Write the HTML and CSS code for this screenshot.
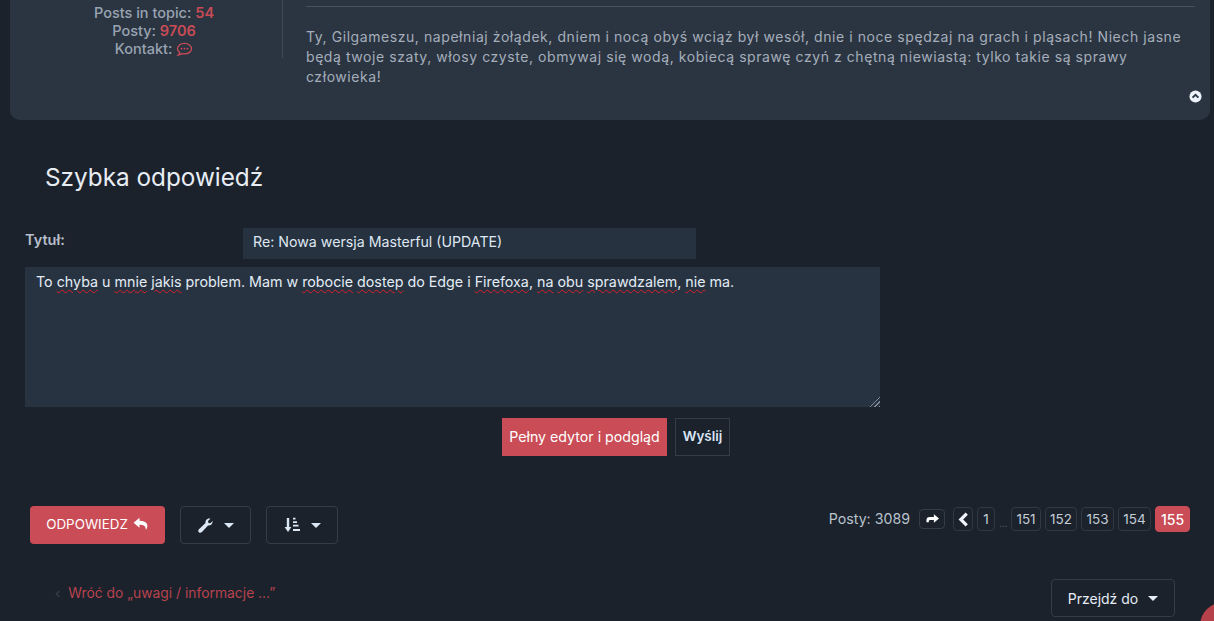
FILE: index.html
```html
<!DOCTYPE html>
<html lang="pl">
<head>
<meta charset="utf-8">
<title>Szybka odpowiedź</title>
<link rel="stylesheet" href="styles.css">
</head>
<body>
<section class="post">
  <div class="profile">
    <div class="stats">
      <div>Posts in topic: <b class="hot">54</b></div>
      <div>Posty: <b class="hot">9706</b></div>
      <div>Kontakt: <svg class="chat" viewBox="0 0 18 16" width="17" height="15"><path d="M9 1.500c4.200 0 7.500 2.500 7.500 5.600S13.200 12.700 9 12.700c-1 0-1.900-.1-2.800-.4-1 .8-2.300 1.500-4 1.700.9-.9 1.500-1.900 1.700-2.900C2.400 10.100 1.500 8.700 1.500 7.100 1.500 4 4.800 1.500 9 1.500z" fill="none" stroke="currentColor" stroke-width="1.400"/><circle cx="5.800" cy="7.100" r="1" fill="currentColor"/><circle cx="9" cy="7.100" r="1" fill="currentColor"/><circle cx="12.200" cy="7.100" r="1" fill="currentColor"/></svg></div>
    </div>
  </div>
  <div class="body">
    <hr class="rule">
    <p class="signature">Ty, Gilgameszu, napełniaj żołądek, dniem i nocą obyś wciąż był wesół, dnie i noce spędzaj na grach i pląsach! Niech jasne będą twoje szaty, włosy czyste, obmywaj się wodą, kobiecą sprawę czyń z chętną niewiastą: tylko takie są sprawy człowieka!</p>
    <svg class="top" viewBox="0 0 14 14" width="13" height="13"><circle cx="7" cy="7" r="6.500" fill="#eef3fa"/><path d="M3.800 8.300 7 5.100l3.200 3.200" fill="none" stroke="#2b3543" stroke-width="2"/></svg>
  </div>
</section>

<h2 class="title">Szybka odpowiedź</h2>

<form class="reply">
  <div class="field">
    <span class="label">Tytuł:</span>
    <div class="subject">Re: Nowa wersja Masterful (UPDATE)</div>
  </div>
  <div class="message">To <u>chyba</u> u <u>mnie</u> <u>jakis</u> problem. Mam w <u>robocie</u> <u>dostep</u> do Edge i <u>Firefoxa</u>, <u>na</u> <u>obu</u> <u>sprawdzalem</u>, <u>nie</u> ma.</div>
  <div class="submit">
    <button type="button" class="full">Pełny edytor i podgląd</button>
    <button type="button" class="send">Wyślij</button>
  </div>
</form>

<div class="actions">
  <div class="tools">
    <button type="button" class="reply-btn">ODPOWIEDZ <svg viewBox="0 0 16 14" width="16" height="14"><path d="M6.500.8.600 5.700l5.900 5V7.700c3.800 0 6.200.6 6.400 5.300 2.700-3.800 2.400-9.100-6.400-9.300z" fill="currentColor"/></svg></button>
    <button type="button" class="tool tool-a"><svg viewBox="0 0 16 16" width="15" height="15"><path d="M15.500 4.100c0 2.500-2.300 4.400-4.800 3.900L4.200 15c-1 1-2.500 1-3.300.1-.9-.9-.8-2.300.1-3.200l7-6.500C7.500 3 9.400.500 11.900.500c.5 0 .9.100 1.300.2l-2.500 2.500.4 2.100 2.100.4 2.500-2.500c.1.300.3.900.3.900z" fill="currentColor"/></svg><i class="caret"></i></button>
    <button type="button" class="tool tool-b"><svg viewBox="0 0 16 16" width="16" height="16"><path d="M4 1v10" stroke="currentColor" stroke-width="2.400"/><path d="M.6 10h6.800L4 15z" fill="currentColor"/><path d="M9 1.700h2.500M9 5.200h4M9 8.700h5.500M9 13h7" stroke="currentColor" stroke-width="1.800"/></svg><i class="caret"></i></button>
  </div>
  <nav class="pagination">
    <span class="count">Posty: 3089</span>
    <a class="page jump"><svg viewBox="0 0 14 10" width="13" height="10"><path d="M8.500 0 14 4.500 8.500 9V6.200H4.200C3.200 6.200 3 7 3 8.500H.5V6C.5 3.800 1.800 2.800 4 2.800h4.500z" fill="currentColor"/></svg></a>
    <span class="group">
      <a class="page prev"><svg viewBox="0 0 10 14" width="11" height="15"><path d="M8 1.500 2.500 7 8 12.500" fill="none" stroke="currentColor" stroke-width="3"/></svg></a>
      <a class="page one">1</a>
      <span class="dots">…</span>
      <a class="page num first">151</a>
      <a class="page num second">152</a>
      <a class="page num">153</a>
      <a class="page num">154</a>
      <a class="page current">155</a>
    </span>
  </nav>
</div>

<div class="footer">
  <a class="back"><span class="chev">‹</span>Wróć do „uwagi / informacje ...”</a>
  <button type="button" class="jumpto">Przejdź do <i class="caret"></i></button>
</div>
<span class="fab"></span>
</body>
</html>
```

FILE: styles.css
```css
* { box-sizing: border-box; }
html, body { height: 621px; overflow: hidden; }
body {
  margin: 0;
  background: #1b222c;
  color: #e6edf6;
  font-family: Inter, "Noto Sans", sans-serif;
  font-size: 14px;
  position: relative;
}
button { font-family: inherit; cursor: pointer; }

.post {
  margin: 0 4px 0 10px;
  height: 120px;
  display: flex;
  background: #2b3542;
  border-radius: 0 0 10px 10px;
}
.profile { width: 273px; height: 58px; border-right: 1px solid #3d4855; padding: 4px 0 0 16px; }
.stats { text-align: center; font-size: 14.500px; line-height: 18px; color: #99a3b1; font-weight: 500; }
.hot { color: #c94b55; font-weight: 600; }
.chat { color: #c94b55; vertical-align: -3px; }
.body { flex: 1; padding: 6px 15px 0 23px; position: relative; }
.rule { margin: 0; border: 0; border-top: 1px solid #47515e; }
.signature { margin: 20px 0 0; font-size: 14px; line-height: 20px; letter-spacing: .57px; color: #a5aeba; }
.top { position: absolute; right: 8px; top: 90px; }

.title { margin: 0; padding: 43px 0 0 45px; font-size: 24.300px; line-height: 29px; font-weight: 400; color: #e8edf4; }

.reply { margin: 36px 0 0 25px; width: 855px; }
.field { display: flex; height: 31px; }
.label { width: 218px; font-weight: 600; line-height: 24px; color: #b6bfca; font-size: 14.500px; }
.subject { width: 453px; height: 31px; background: #263240; padding: 0 10px; line-height: 28px; font-size: 14.200px; color: #dfe7f1; }
.message {
  margin-top: 8px;
  height: 140px;
  background: #273341;
  padding: 5px 11px;
  line-height: 20px;
  font-size: 14.270px;
  color: #e3ebf5;
  position: relative;
}
.message::after {
  content: "";
  position: absolute;
  right: 0;
  bottom: 0;
  width: 13px;
  height: 13px;
  background: repeating-linear-gradient(135deg, transparent 0 2px, #7f8995 2px 3px);
  clip-path: polygon(100% 0, 100% 100%, 0 100%);
}
.message u { text-decoration: underline wavy #d8222a 1px; text-underline-offset: 2px; }
.submit { display: flex; justify-content: flex-end; gap: 8px; margin-top: 11px; padding-right: 150px; }
.full, .send { height: 38px; border: 1px solid transparent; font-size: 14.200px; padding: 0 5px 2px; }
.full { width: 165px; background: #c94c56; color: #fff; }
.send { width: 55px; background: #1b222c; border-color: #333d4a; color: #d9e6f7; font-weight: 600; font-size: 13.500px; }

.actions { display: flex; justify-content: space-between; align-items: flex-start; margin: 50px 24px 0 30px; }
.tools { display: flex; gap: 15px; }
.reply-btn { width: 135px; height: 38px; background: #c94c56; color: #fff; border: 0; border-radius: 4px; font-size: 13.400px; font-weight: 400; display: flex; align-items: center; justify-content: center; gap: 5px; padding: 0 6px 2px; }
.tool { height: 38px; background: transparent; border: 1px solid #333d4a; border-radius: 4px; color: #dbe7f5; display: flex; align-items: center; justify-content: center; gap: 11px; }
.tool-a { width: 71px; }
.tool-b { width: 72px; }
.caret { display: inline-block; width: 0; height: 0; border: 5px solid transparent; border-top-color: currentColor; border-bottom: 0; }

.pagination { display: flex; align-items: center; height: 26px; font-size: 14px; }
.count { color: #b9c2cd; font-size: 14.200px; margin: 0 9px 2px 0; }
.group { display: flex; align-items: center; margin-left: 8px; gap: 4px; }
.page { display: flex; align-items: center; justify-content: center; height: 24px; border: 1px solid #2f3845; border-radius: 4px; color: #c4ccd6; font-size: 13.500px; }
.jump { width: 26px; height: 20px; color: #fff; background: #1b222c; border-color: #333d4a; }
.prev { width: 20px; color: #eef3fa; }
.one { width: 18px; }
.dots { width: 8px; color: #59626e; font-size: 10px; text-align: center; padding-top: 7px; }
.num { width: 33px; }
.num.first { width: 30px; }
.num.second { width: 32px; }
.current { width: 35px; height: 26px; background: #c94c56; border-color: #c94c56; color: #fff; font-weight: 500; font-size: 14px; }

.footer { display: flex; justify-content: space-between; align-items: flex-start; margin: 35px 39px 0 55px; }
.back { color: #b8434e; font-size: 13.850px; margin-top: 6px; }
.chev { color: #3a434f; margin-right: 8px; }
.jumpto { width: 124px; height: 38px; background: transparent; border: 1px solid #333d4a; border-radius: 4px; color: #e6edf6; font-size: 14px; display: flex; align-items: center; justify-content: center; gap: 10px; }
.fab { position: absolute; left: 1200px; top: 602px; width: 48px; height: 48px; border-radius: 50%; background: #b5424a; }
```
